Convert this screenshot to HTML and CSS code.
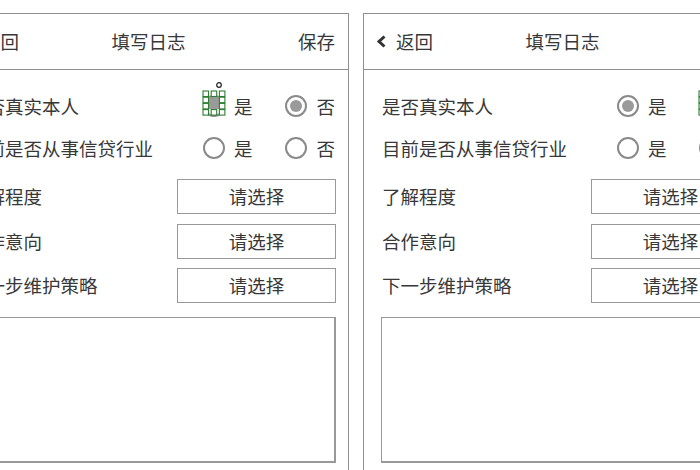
FILE: index.html
```html
<!DOCTYPE html>
<html lang="zh-CN">
<head>
    <meta charset="UTF-8">
    <meta name="viewport" content="width=device-width, initial-scale=1.0">
    <title>填写日志</title>
    <link rel="stylesheet" href="styles.css">
</head>
<body>

<div class="stage">

    <!-- left screen: 否 checked, 是 selected in the editor -->
    <section class="phone">
        <header class="bar">
            <span class="back">
                <svg class="chev" width="11" height="13" viewBox="0 0 11 13"><polyline points="8.5,1.5 3,6.5 8.5,11.5" fill="none" stroke="#333" stroke-width="3"/></svg>
                返回
            </span>
            <span class="title">填写日志</span>
            <span class="save">保存</span>
        </header>
        <div class="form">
            <div class="radio-row">
                <span class="label">是否真实本人</span>
                <div class="choices">
                    <span class="choice">
                        <span class="radio-wrap">
                            <i class="radio"></i>
                            <svg class="handles" width="24" height="34" viewBox="0 0 24 34">
                                <circle cx="17" cy="3" r="2.3" fill="#fff" stroke="#222" stroke-width="1.2"/>
                                <rect x="7" y="15" width="10" height="12" fill="#9a9a9a"/>
                                <g fill="#fff" stroke="#2e7d32" stroke-width="1.1">
                                    <rect x="1" y="9" width="5.5" height="5.5"/><rect x="9.2" y="9" width="5.5" height="5.5"/><rect x="17.4" y="9" width="5.5" height="5.5"/>
                                    <rect x="1" y="15.2" width="5.5" height="5.5"/><rect x="17.4" y="15.2" width="5.5" height="5.5"/>
                                    <rect x="1" y="21.4" width="5.5" height="5.5"/><rect x="17.4" y="21.4" width="5.5" height="5.5"/>
                                    <rect x="1" y="27.6" width="5.5" height="5.5"/><rect x="9.2" y="27.6" width="5.5" height="5.5"/><rect x="17.4" y="27.6" width="5.5" height="5.5"/>
                                </g>
                            </svg>
                        </span>
                        是
                    </span>
                    <span class="choice"><span class="radio-wrap"><i class="radio on"></i></span>否</span>
                </div>
            </div>
            <div class="radio-row">
                <span class="label">目前是否从事信贷行业</span>
                <div class="choices">
                    <span class="choice"><span class="radio-wrap"><i class="radio"></i></span>是</span>
                    <span class="choice"><span class="radio-wrap"><i class="radio"></i></span>否</span>
                </div>
            </div>
            <div class="select-rows">
                <div class="select-row"><span class="label">了解程度</span><div class="picker">请选择</div></div>
                <div class="select-row"><span class="label">合作意向</span><div class="picker">请选择</div></div>
                <div class="select-row"><span class="label">下一步维护策略</span><div class="picker">请选择</div></div>
            </div>
            <div class="notes"></div>
        </div>
    </section>

    <!-- right screen: 是 checked, 否 selected in the editor -->
    <section class="phone">
        <header class="bar">
            <span class="back">
                <svg class="chev" width="11" height="13" viewBox="0 0 11 13"><polyline points="8.5,1.5 3,6.5 8.5,11.5" fill="none" stroke="#333" stroke-width="3"/></svg>
                返回
            </span>
            <span class="title">填写日志</span>
            <span class="save">保存</span>
        </header>
        <div class="form">
            <div class="radio-row">
                <span class="label">是否真实本人</span>
                <div class="choices">
                    <span class="choice"><span class="radio-wrap"><i class="radio on"></i></span>是</span>
                    <span class="choice">
                        <span class="radio-wrap">
                            <i class="radio"></i>
                            <svg class="handles" width="24" height="34" viewBox="0 0 24 34">
                                <circle cx="17" cy="3" r="2.3" fill="#fff" stroke="#222" stroke-width="1.2"/>
                                <rect x="7" y="15" width="10" height="12" fill="#9a9a9a"/>
                                <g fill="#fff" stroke="#2e7d32" stroke-width="1.1">
                                    <rect x="1" y="9" width="5.5" height="5.5"/><rect x="9.2" y="9" width="5.5" height="5.5"/><rect x="17.4" y="9" width="5.5" height="5.5"/>
                                    <rect x="1" y="15.2" width="5.5" height="5.5"/><rect x="17.4" y="15.2" width="5.5" height="5.5"/>
                                    <rect x="1" y="21.4" width="5.5" height="5.5"/><rect x="17.4" y="21.4" width="5.5" height="5.5"/>
                                    <rect x="1" y="27.6" width="5.5" height="5.5"/><rect x="9.2" y="27.6" width="5.5" height="5.5"/><rect x="17.4" y="27.6" width="5.5" height="5.5"/>
                                </g>
                            </svg>
                        </span>
                        否
                    </span>
                </div>
            </div>
            <div class="radio-row">
                <span class="label">目前是否从事信贷行业</span>
                <div class="choices">
                    <span class="choice"><span class="radio-wrap"><i class="radio"></i></span>是</span>
                    <span class="choice"><span class="radio-wrap"><i class="radio"></i></span>否</span>
                </div>
            </div>
            <div class="select-rows">
                <div class="select-row"><span class="label">了解程度</span><div class="picker">请选择</div></div>
                <div class="select-row"><span class="label">合作意向</span><div class="picker">请选择</div></div>
                <div class="select-row"><span class="label">下一步维护策略</span><div class="picker">请选择</div></div>
            </div>
            <div class="notes"></div>
        </div>
    </section>

</div>

</body>
</html>
```

FILE: styles.css
```css
body {
    margin: 0;
    background-color: #fff;
    font-family: "Noto Sans CJK SC", "Microsoft YaHei", sans-serif;
    font-size: 18.5px;
    color: #383838;
    overflow: hidden;
}

.stage {
    display: flex;
    gap: 14px;
    margin-left: -51px;
    padding-top: 13px;
}

.phone {
    flex: none;
    width: 400px;
    height: 480px;
    box-sizing: border-box;
    border: 1px solid #8f8f8f;
    border-bottom: none;
}

/* header */
.bar {
    height: 55px;
    border-bottom: 1px solid #8f8f8f;
    display: grid;
    grid-template-columns: 1fr auto 1fr;
    align-items: center;
    padding: 0 13px 0 12px;
    line-height: 1;
}

.back {
    display: flex;
    align-items: center;
    gap: 9px;
}

.chev {
    display: block;
}

.save {
    justify-self: end;
}

/* form body */
.form {
    padding: 15px 12px 0 17px;
}

.label {
    line-height: 1;
    padding-left: 1px;
}

.radio-row {
    height: 42px;
    display: flex;
    align-items: center;
    justify-content: space-between;
}

.choices {
    display: flex;
    gap: 33px;
    margin-right: 1px;
}

.choice {
    display: flex;
    align-items: center;
    gap: 9px;
    line-height: 1;
}

.radio-wrap {
    position: relative;
    display: block;
    width: 22px;
    height: 22px;
}

.radio {
    display: flex;
    align-items: center;
    justify-content: center;
    width: 22px;
    height: 22px;
    box-sizing: border-box;
    border: 2px solid #8a8a8a;
    border-radius: 50%;
    background: #fff;
}

.radio.on::after {
    content: "";
    width: 12px;
    height: 12px;
    border-radius: 50%;
    background-color: #9a9a9a;
}

/* editor selection handles over a radio */
.handles {
    position: absolute;
    left: -1px;
    top: -13px;
}

.select-rows {
    margin-top: 10px;
    display: flex;
    flex-direction: column;
    gap: 9.5px;
}

.select-row {
    display: flex;
    align-items: center;
    justify-content: space-between;
}

.picker {
    width: 159px;
    height: 35px;
    box-sizing: border-box;
    border: 1px solid #999;
    display: flex;
    align-items: center;
    justify-content: center;
    line-height: 1;
}

.notes {
    margin-top: 14px;
    height: 146px;
    box-sizing: border-box;
    border: 1px solid #999;
    border-width: 1px 2px 2px 1px;
}
```
